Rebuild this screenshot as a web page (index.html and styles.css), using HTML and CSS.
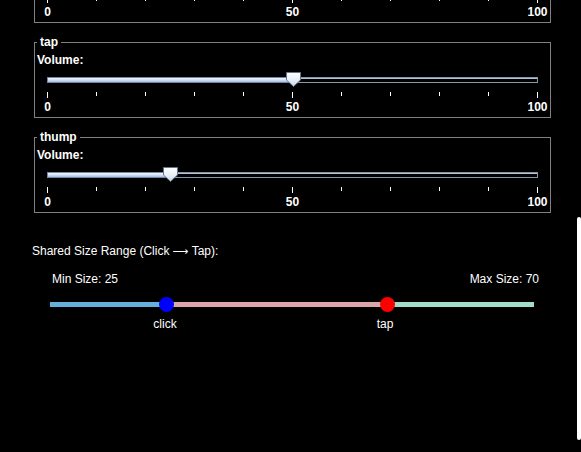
FILE: index.html
```html
<!DOCTYPE html>
<html>
<head>
<meta charset="utf-8">
<link rel="stylesheet" href="styles.css">
</head>
<body>
<div class="viewport">
  <div class="panels">
    <section class="panel">
      <span class="panel-title">click</span>
      <div class="volume">Volume:</div>
      <div class="slider">
        <div class="slider-row">
          <div class="track"><div class="fill" style="width:246px"></div><div class="rest"></div></div>
          <svg class="thumb" style="left:239px" viewBox="0 0 15 15"><use href="#thumb"/></svg>
        </div>
        <div class="ticks"><i class="major"></i><i></i><i></i><i></i><i></i><i class="major"></i><i></i><i></i><i></i><i></i><i class="major"></i></div>
        <div class="labels"><span>0</span><span>50</span><span>100</span></div>
      </div>
    </section>
    <section class="panel">
      <span class="panel-title">tap</span>
      <div class="volume">Volume:</div>
      <div class="slider">
        <div class="slider-row">
          <div class="track"><div class="fill" style="width:246px"></div><div class="rest"></div></div>
          <svg class="thumb" style="left:239px" viewBox="0 0 15 15"><use href="#thumb"/></svg>
        </div>
        <div class="ticks"><i class="major"></i><i></i><i></i><i></i><i></i><i class="major"></i><i></i><i></i><i></i><i></i><i class="major"></i></div>
        <div class="labels"><span>0</span><span>50</span><span>100</span></div>
      </div>
    </section>
    <section class="panel">
      <span class="panel-title">thump</span>
      <div class="volume">Volume:</div>
      <div class="slider">
        <div class="slider-row">
          <div class="track"><div class="fill" style="width:123px"></div><div class="rest"></div></div>
          <svg class="thumb" style="left:116px" viewBox="0 0 15 15"><use href="#thumb"/></svg>
        </div>
        <div class="ticks"><i class="major"></i><i></i><i></i><i></i><i></i><i class="major"></i><i></i><i></i><i></i><i></i><i class="major"></i></div>
        <div class="labels"><span>0</span><span>50</span><span>100</span></div>
      </div>
    </section>
  </div>

  <div class="shared">
    <div class="shared-title">Shared Size Range (Click <span class="arrow">⟶</span> Tap):</div>
    <div class="minmax"><span>Min Size: 25</span><span>Max Size: 70</span></div>
    <div class="range">
      <div class="knob" style="left:24.17%"><span class="dot dot-blue"></span><span class="knob-label">click</span></div>
      <div class="knob" style="left:69.63%"><span class="dot dot-red"></span><span class="knob-label">tap</span></div>
    </div>
  </div>

  <div class="scrollbar"></div>

  <svg class="defs" width="0" height="0">
    <defs>
      <linearGradient id="tg" x1="0" y1="0" x2="0" y2="1">
        <stop offset="0" stop-color="#ffffff"/>
        <stop offset="0.6" stop-color="#e4ecf6"/>
        <stop offset="1" stop-color="#c4d4ea"/>
      </linearGradient>
      <path id="thumb" d="M0.5 0.5 H14.5 V8 L7.5 14.5 L0.5 8 Z" fill="url(#tg)" stroke="#65738c" stroke-width="1"/>
    </defs>
  </svg>
</div>
</body>
</html>
```

FILE: styles.css
```css
html, body {
  margin: 0;
  padding: 0;
  background: #000;
}
body {
  font-family: "Liberation Sans", Arial, sans-serif;
  font-size: 12px;
  line-height: 14px;
  color: #fff;
}
.viewport {
  position: relative;
  width: 581px;
  height: 452px;
  overflow: hidden;
  background: #000;
}
.panels {
  margin: -53px 0 0 34px;
  width: 517px;
  display: flex;
  flex-direction: column;
  gap: 19px;
}
.panel {
  position: relative;
  box-sizing: border-box;
  height: 76px;
  border: 1px solid #808080;
  padding: 10px 0 0 2px;
}
.panel-title {
  position: absolute;
  top: -8px;
  left: 2px;
  padding: 0 3px;
  background: #000;
  font-weight: bold;
}
.volume {
  font-weight: bold;
}
.slider {
  margin: 5px 0 0 -2px;
  padding: 0 12px;
}
.slider-row {
  position: relative;
  box-sizing: border-box;
  height: 15px;
  padding-top: 5px;
}
.track {
  display: flex;
  height: 6px;
}
.fill {
  box-sizing: border-box;
  height: 6px;
  border: 1px solid #6f84aa;
  background: linear-gradient(to bottom, #f4f8fc 0%, #d2e0f0 50%, #a9bfdf 100%);
}
.rest {
  flex: 1;
  box-sizing: border-box;
  height: 6px;
  border: 1px solid #8795ab;
  border-left: none;
  background: linear-gradient(to bottom, #b4c2d6 0, #b4c2d6 1px, #000 1px);
}
.thumb {
  position: absolute;
  top: 0;
  width: 15px;
  height: 15px;
}
.ticks {
  display: flex;
  justify-content: space-between;
  align-items: flex-start;
  height: 6px;
  margin-top: 5px;
}
.ticks i {
  display: block;
  width: 1px;
  height: 4px;
  background: #fff;
}
.ticks i.major {
  height: 6px;
}
.labels {
  display: flex;
  justify-content: space-between;
  margin-top: 2px;
  font-weight: bold;
}
.labels span {
  display: flex;
  justify-content: center;
  width: 1px;
  white-space: nowrap;
}
.shared {
  margin: 31px 0 0 32px;
  width: 519px;
}
.shared-title {
  height: 14px;
}
.arrow {
  font-family: "DejaVu Sans", sans-serif;
  font-size: 11px;
  line-height: 8px;
}
.minmax {
  display: flex;
  justify-content: space-between;
  margin-top: 14px;
  padding: 0 12px 0 20px;
}
.range {
  position: relative;
  height: 5px;
  margin: 16px 17px 0 18px;
  background: linear-gradient(to right, #64afdc 0%, #64afdc 24.17%, #dca5aa 24.17%, #dca5aa 69.63%, #a5dcc8 69.63%, #a5dcc8 100%);
}
.knob {
  position: absolute;
  top: -5px;
  width: 0;
  display: flex;
  flex-direction: column;
  align-items: center;
}
.dot {
  flex: none;
  width: 15px;
  height: 15px;
  border-radius: 50%;
}
.dot-blue { background: #0000ff; }
.dot-red { background: #ff0000; }
.knob-label {
  margin: 5px 4px 0 0;
  white-space: nowrap;
}
.scrollbar {
  position: absolute;
  top: 217px;
  right: 0;
  width: 4px;
  height: 223px;
  background: #fff;
  border-radius: 2px;
}
.defs {
  position: absolute;
  width: 0;
  height: 0;
}
```
